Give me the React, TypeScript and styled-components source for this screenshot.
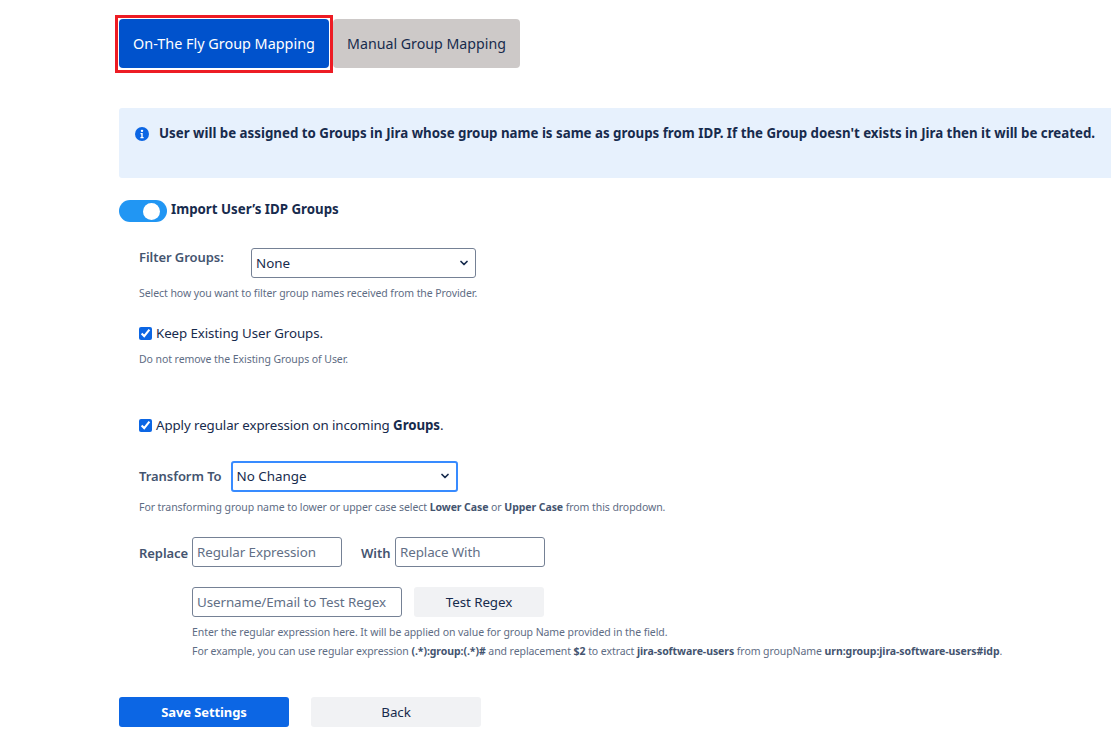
import React from 'react'
import styled, { createGlobalStyle } from 'styled-components'
import { ChevronDown } from 'lucide-react'

const GlobalStyle = createGlobalStyle`
  html, body {
    margin: 0;
    background: #fff;
    overflow: hidden;
  }
  body {
    font-family: "Noto Sans", "Open Sans", sans-serif;
    color: #172b4d;
  }
`

const Page = styled.div`
  width: 1111px;
  height: 733px;
  padding: 15px 0 0 119px;
  box-sizing: border-box;
  overflow: hidden;
`

const Tabs = styled.div`
  display: flex;
  height: 58px;
  margin-left: -4px;
`

const ActiveFrame = styled.div`
  border: 3px solid #ed1c24;
  padding: 1px;
  width: 218px;
  height: 58px;
  box-sizing: border-box;
`

const TabButton = styled.div<{ $active?: boolean }>`
  display: flex;
  align-items: center;
  justify-content: center;
  box-sizing: border-box;
  height: 49px;
  width: ${props => (props.$active ? '210px' : '187px')};
  margin-top: ${props => (props.$active ? '0' : '4px')};
  border-radius: 4px;
  font-size: ${props => (props.$active ? '14.4px' : '14.2px')};
  background: ${props => (props.$active ? '#0052cc' : '#cdc9c8')};
  color: ${props => (props.$active ? '#fff' : '#172b4d')};
`

const InfoBox = styled.div`
  display: flex;
  gap: 10px;
  height: 70px;
  width: 1000px;
  margin-top: 35px;
  padding: 16px 0 0 16px;
  box-sizing: border-box;
  background: #e7f1fd;
  border-radius: 3px;
  font-size: 13.3px;
  line-height: 18px;
  font-weight: 700;
  white-space: nowrap;
`

const InfoIcon = styled.svg`
  width: 14px;
  height: 14px;
  margin-top: 3px;
  flex: none;
`

const ToggleRow = styled.div`
  display: flex;
  align-items: center;
  gap: 4px;
  height: 22px;
  margin-top: 22px;
  font-size: 13.3px;
  font-weight: 700;
`

const ToggleLabel = styled.span`
  margin-top: -4px;
`

const Toggle = styled.div`
  display: flex;
  align-items: center;
  justify-content: flex-end;
  width: 48px;
  height: 22px;
  padding-right: 7px;
  box-sizing: border-box;
  border-radius: 11px;
  background: #2196f3;
`

const Knob = styled.div`
  width: 17px;
  height: 17px;
  border-radius: 50%;
  background: #fff;
`

const Section = styled.div<{ $top: number; $left?: number }>`
  margin-top: ${props => props.$top}px;
  margin-left: ${props => props.$left ?? 20}px;
`

const FieldRow = styled.div<{ $gap?: number }>`
  display: flex;
  align-items: center;
  gap: ${props => props.$gap ?? 0}px;
`

const FieldLabel = styled.label<{ $width?: number; $nudge?: number }>`
  width: ${props => (props.$width ? `${props.$width}px` : 'auto')};
  flex: none;
  font-size: 13px;
  font-weight: 600;
  letter-spacing: -0.06px;
  color: #44546f;
  margin-top: ${props => props.$nudge ?? 0}px;
`

const WithLabel = styled(FieldLabel)`
  margin-left: 19px;
`

const SelectBox = styled.div<{ $width: number; $focused?: boolean }>`
  display: flex;
  align-items: center;
  justify-content: space-between;
  box-sizing: border-box;
  width: ${props => props.$width}px;
  height: ${props => (props.$focused ? '31px' : '30px')};
  padding: 0 5px 1px 4px;
  border: ${props => (props.$focused ? '2px solid #388bff' : '1px solid #758195')};
  border-radius: 3px;
  font-size: 13.4px;
  color: #172b4d;
`

const Help = styled.div<{ $top: number }>`
  margin-top: ${props => props.$top}px;
  font-size: 10.5px;
  line-height: 15px;
  letter-spacing: -0.07px;
  color: #5e6c84;
  white-space: nowrap;
  b {
    font-weight: 700;
    color: #44546f;
  }
`

const CheckRow = styled.label`
  display: flex;
  align-items: center;
  gap: 4px;
  font-size: 13.3px;
  line-height: 18px;
  letter-spacing: -0.08px;
  color: #172b4d;
  b {
    font-weight: 700;
  }
`

const Check = styled.input`
  margin: 0;
  width: 13px;
  height: 13px;
  accent-color: #0c66e4;
`

const TextInput = styled.input<{ $width: number }>`
  box-sizing: border-box;
  width: ${props => props.$width}px;
  height: 30px;
  padding: 0 4px;
  border: 1px solid #758195;
  border-radius: 3px;
  font-family: inherit;
  font-size: 13.4px;
  letter-spacing: -0.1px;
  background: #fff;
  &::placeholder {
    color: #626f86;
    opacity: 1;
  }
`

const Button = styled.button<{ $primary?: boolean; $width: number }>`
  width: ${props => props.$width}px;
  height: 30px;
  padding: 0;
  border: 0;
  border-radius: 3px;
  font-family: inherit;
  font-size: ${props => (props.$primary ? '13px' : '13.4px')};
  letter-spacing: -0.1px;
  font-weight: ${props => (props.$primary ? 700 : 400)};
  background: ${props => (props.$primary ? '#0c66e4' : '#f1f2f4')};
  color: ${props => (props.$primary ? '#fff' : '#172b4d')};
`

const Actions = styled.div`
  display: flex;
  gap: 22px;
  margin-top: 38px;
`

const App = () => (
  <Page>
    <GlobalStyle />
    <Tabs>
      <ActiveFrame>
        <TabButton $active>On-The Fly Group Mapping</TabButton>
      </ActiveFrame>
      <TabButton>Manual Group Mapping</TabButton>
    </Tabs>

    <InfoBox>
      <InfoIcon viewBox="0 0 24 24">
        <circle cx="12" cy="12" r="12" fill="#0c66e4" />
        <circle cx="12" cy="6.6" r="2.1" fill="#fff" />
        <path d="M9.5 10.2h3.7v7h1.6v2.2H9.3v-2.2h1.5v-4.8H9.5z" fill="#fff" />
      </InfoIcon>
      User will be assigned to Groups in Jira whose group name is same as groups from IDP. If the Group doesn't exists in Jira then it will be created.
    </InfoBox>

    <ToggleRow>
      <Toggle>
        <Knob />
      </Toggle>
      <ToggleLabel>Import User’s IDP Groups</ToggleLabel>
    </ToggleRow>

    <Section $top={26}>
      <FieldRow>
        <FieldLabel $width={112} $nudge={-12}>Filter Groups:</FieldLabel>
        <SelectBox $width={225}>
          None
          <ChevronDown size={12} strokeWidth={3.5} />
        </SelectBox>
      </FieldRow>
      <Help $top={8}>Select how you want to filter group names received from the Provider.</Help>
    </Section>

    <Section $top={23}>
      <CheckRow>
        <Check type="checkbox" defaultChecked />
        Keep Existing User Groups.
      </CheckRow>
      <Help $top={10}>Do not remove the Existing Groups of User.</Help>
    </Section>

    <Section $top={49}>
      <CheckRow>
        <Check type="checkbox" defaultChecked />
        <span>Apply regular expression on incoming <b>Groups</b>.</span>
      </CheckRow>
    </Section>

    <Section $top={27}>
      <FieldRow $gap={9}>
        <FieldLabel $nudge={-2}>Transform To</FieldLabel>
        <SelectBox $width={227} $focused>
          No Change
          <ChevronDown size={12} strokeWidth={3.5} />
        </SelectBox>
      </FieldRow>
      <Help $top={8}>
        For transforming group name to lower or upper case select <b>Lower Case</b> or <b>Upper Case</b> from this dropdown.
      </Help>
    </Section>

    <Section $top={22}>
      <FieldRow>
        <FieldLabel $width={53} $nudge={2}>Replace</FieldLabel>
        <TextInput $width={150} placeholder="Regular Expression" />
        <WithLabel $width={34} $nudge={2}>With</WithLabel>
        <TextInput $width={150} placeholder="Replace With" />
      </FieldRow>
    </Section>

    <Section $top={20} $left={73}>
      <FieldRow $gap={12}>
        <TextInput $width={210} placeholder="Username/Email to Test Regex" />
        <Button $width={130}>Test Regex</Button>
      </FieldRow>
      <Help $top={8}>Enter the regular expression here. It will be applied on value for group Name provided in the field.</Help>
      <Help $top={4}>
        For example, you can use regular expression <b>(.*):group:(.*)#</b> and replacement <b>$2</b> to extract <b>jira-software-users</b> from groupName <b>urn:group:jira-software-users#idp</b>.
      </Help>
    </Section>

    <Actions>
      <Button $primary $width={170}>Save Settings</Button>
      <Button $width={170}>Back</Button>
    </Actions>
  </Page>
)

export default App
